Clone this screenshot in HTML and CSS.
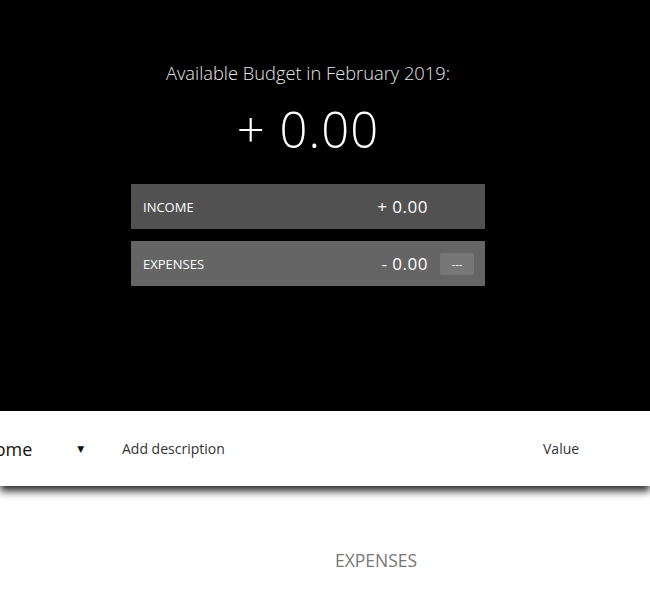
FILE: index.html
```html
<!DOCTYPE html>
<html>
<head>
<meta charset="utf-8">
<link rel="stylesheet" href="styles.css">
</head>
<body>
<div class="top">
  <div class="budget">
    <div class="budget-title">Available Budget in February 2019:</div>
    <div class="budget-value">+ 0.00</div>
    <div class="row income">
      <div class="row-label">INCOME</div>
      <div class="row-right">
        <div class="row-value">+ 0.00</div>
        <div class="row-pct row-pct-empty"></div>
      </div>
    </div>
    <div class="row expenses">
      <div class="row-label">EXPENSES</div>
      <div class="row-right">
        <div class="row-value">- 0.00</div>
        <div class="row-pct">---</div>
      </div>
    </div>
  </div>
</div>
<div class="add">
  <div class="add-type"><span class="add-type-text">Income</span><span class="add-arrow">▼</span></div>
  <div class="add-desc">Add description</div>
  <div class="add-value">Value</div>
</div>
<div class="lists">
  <div class="list-title">EXPENSES</div>
</div>
</body>
</html>
```

FILE: styles.css
```css
* { box-sizing: border-box; }
html, body { margin: 0; padding: 0; }
body {
  font-family: "Open Sans", "DejaVu Sans", sans-serif;
  background: #fff;
  width: 650px;
  overflow: hidden;
}
.top {
  background: #000;
  height: 411px;
  padding-top: 60px;
}
.budget {
  width: 354px;
  margin-left: 131px;
  text-align: center;
}
.budget-title {
  font-size: 18.3px;
  font-weight: 300;
  color: #e6e6e6;
  line-height: 26px;
}
.budget-value {
  font-size: 49px;
  font-weight: 300;
  color: #fff;
  line-height: 60px;
  margin-top: 13px;
  margin-bottom: 25px;
  letter-spacing: 1px;
}
.row {
  height: 45px;
  display: flex;
  align-items: center;
  justify-content: space-between;
  padding: 0 11px 0 12px;
  color: #fff;
}
.income { background: #515151; }
.expenses { background: #656565; margin-top: 12px; }
.row-label {
  font-size: 13px;
  font-weight: 400;
}
.row-right {
  display: flex;
  align-items: center;
  gap: 12px;
}
.row-value {
  font-size: 17px;
  letter-spacing: 0.5px;
}
.row-pct {
  width: 34px;
  height: 22px;
  background: #777;
  border-radius: 2px;
  font-size: 11px;
  line-height: 22px;
  text-align: center;
}
.row-pct-empty { background: transparent; }
.add {
  height: 75px;
  background: #fff;
  display: flex;
  align-items: center;
  box-shadow: 0 5px 8px rgba(0, 0, 0, 0.85);
  position: relative;
}
.add-type {
  display: flex;
  align-items: center;
  margin-left: -30px;
  width: 149px;
}
.add-type-text {
  font-size: 18px;
  color: #111;
}
.add-arrow {
  font-size: 9px;
  margin-left: 45px;
  color: #111;
}
.add-desc {
  margin-left: 3px;
  font-size: 14px;
  color: #333;
  width: 421px;
}
.add-value {
  font-size: 14px;
  color: #333;
}
.lists {
  padding-top: 62px;
}
.list-title {
  width: 200px;
  margin-left: 276px;
  text-align: center;
  font-size: 17.5px;
  color: #777;
}
```
